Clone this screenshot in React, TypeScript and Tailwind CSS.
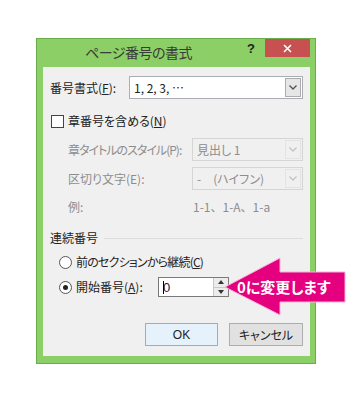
import React from "react";

const Chevron = ({ color }: { color: string }) => (
  <svg width="8" height="5" viewBox="0 0 8 5">
    <path d="M0.5 0.5 L4 4 L7.5 0.5" fill="none" stroke={color} strokeWidth="1.4" />
  </svg>
);

const Select = ({ value, disabled, className }: { value: string; disabled?: boolean; className: string }) => (
  <div
    className={`flex h-[23px] items-stretch border ${disabled ? "border-[#d5d5d5] bg-[#f0f0f0]" : "border-[#abadb3] bg-white"} ${className}`}
  >
    <div className={`flex flex-1 items-center whitespace-nowrap pl-[4px] ${disabled ? "text-[#8d8d8d]" : "text-[#222]"}`}>{value}</div>
    <div
      className={`m-[1px] flex w-[16px] items-center justify-center border ${disabled ? "border-[#e3e3e3] bg-[#f0f0f0]" : "border-[#acacac] bg-[#e6e6e6]"}`}
    >
      <Chevron color={disabled ? "#c4c4c4" : "#555"} />
    </div>
  </div>
);

export default function App() {
  return (
    <div className="relative h-[400px] w-[355px] overflow-hidden whitespace-nowrap bg-white font-['Noto_Sans_CJK_JP','Noto_Sans',sans-serif] text-[12px] leading-none text-[#222] [font-feature-settings:'palt']">
      <div className="ml-[36px] mt-[38px] flex h-[326px] w-[280px] flex-col border border-[#69ad4c] bg-[#8bcf66]">
        {/* title bar */}
        <div className="flex h-[28px] items-start">
          <div className="ml-[48px] mt-[6px] w-[110px] text-[14px] tracking-[-0.5px] text-[#3a3a3a]">ページ番号の書式</div>
          <div className="ml-[52px] mt-[3px] font-['Liberation_Sans',sans-serif] text-[13px] font-bold text-[#222]">?</div>
          <div className="ml-[10px] flex h-[18px] w-[45px] items-center justify-center bg-[#c75050]">
            <svg width="9" height="9" viewBox="0 0 9 9">
              <path d="M1 1 L8 8 M8 1 L1 8" stroke="white" strokeWidth="1.6" />
            </svg>
          </div>
        </div>
        {/* client area */}
        <div className="ml-[6px] flex h-[289px] w-[267px] flex-col bg-[#f0f0f0]">
          {/* row 1 */}
          <div className="mt-[9px] flex items-center">
            <div className="ml-[7px] w-[79px] shrink-0">
              番号書式(<span className="underline">F</span>):
            </div>
            <Select value="1, 2, 3, …" className="w-[174px]" />
          </div>
          {/* checkbox */}
          <div className="mt-[14px] flex h-[16px] items-center">
            <div className="ml-[8px] h-[13px] w-[13px] border border-[#444] bg-white" />
            <div className="ml-[4px]">
              章番号を含める(<span className="underline">N</span>)
            </div>
          </div>
          {/* disabled rows */}
          <div className="mt-[9px] flex items-center text-[#8d8d8d]">
            <div className="ml-[25px] w-[124px] shrink-0 tracking-[-1px]">章タイトルのスタイル(P):</div>
            <Select value="見出し 1" disabled className="w-[111px]" />
          </div>
          <div className="mt-[6px] flex items-center text-[#8d8d8d]">
            <div className="ml-[25px] w-[124px] shrink-0">区切り文字(E):</div>
            <Select value="-　(ハイフン)" disabled className="w-[111px]" />
          </div>
          <div className="mt-[9px] flex h-[16px] items-center text-[#8d8d8d]">
            <div className="ml-[25px] w-[124px] shrink-0">例:</div>
            <div className="pl-[1px] [font-feature-settings:normal]">1-1、1-A、1-a</div>
          </div>
          {/* group */}
          <div className="mt-[15px] flex h-[16px] items-center pr-[7px]">
            <div className="ml-[7px]">連続番号</div>
            <div className="ml-[6px] h-px flex-1 bg-[#dcdcdc]" />
          </div>
          <div className="mt-[8px] flex h-[16px] items-center">
            <div className="ml-[16px] h-[13px] w-[13px] rounded-full border border-[#555] bg-white" />
            <div className="ml-[4px] tracking-[-0.8px]">
              前のセクションから継続(<span className="underline">C</span>)
            </div>
          </div>
          <div className="mt-[7px] flex h-[20px] items-center">
            <div className="ml-[16px] flex h-[13px] w-[13px] items-center justify-center rounded-full border border-[#555] bg-white">
              <div className="h-[5px] w-[5px] rounded-full bg-[#222]" />
            </div>
            <div className="ml-[4px] w-[82px] shrink-0">
              開始番号(<span className="underline">A</span>):
            </div>
            <div className="flex h-[20px] w-[71px] items-stretch border border-[#7a7a7a] bg-white">
              <div className="relative flex flex-1 items-center pl-[4px]">
                <span className="font-['Liberation_Sans',sans-serif] text-[13px]">0</span>
                <div className="absolute left-[4px] top-[3px] h-[13px] w-px bg-black" />
              </div>
              <div className="flex w-[15px] flex-col border-l border-[#c8c8c8] bg-[#ececec]">
                <div className="flex flex-1 items-center justify-center border-b border-[#c8c8c8]">
                  <svg width="6" height="4" viewBox="0 0 6 4"><path d="M0 4 L3 0 L6 4Z" fill="#333" /></svg>
                </div>
                <div className="flex flex-1 items-center justify-center">
                  <svg width="6" height="4" viewBox="0 0 6 4"><path d="M0 0 L3 4 L6 0Z" fill="#333" /></svg>
                </div>
              </div>
            </div>
          </div>
          {/* buttons */}
          <div className="mt-[26px] flex justify-end gap-[11px] pr-[7px]">
            <div className="flex h-[23px] w-[73px] items-center justify-center border border-[#7eb4ea] bg-[#e5f1fb] font-['Liberation_Sans',sans-serif] text-[12px]">
              OK
            </div>
            <div className="flex h-[23px] w-[74px] items-center justify-center border border-[#adadad] bg-[#e1e1e1]">
              キャンセル
            </div>
          </div>
        </div>
      </div>
      {/* callout overlay */}
      <svg className="absolute left-0 top-0" width="355" height="400" viewBox="0 0 355 400">
        <polygon
          points="225,287 280,258 280,272 345,272 345,302 280,302 280,315"
          fill="#e4007f"
          stroke="#f6b3d7"
          strokeWidth="1"
        />
      </svg>
      <div className="absolute left-[237px] top-[278px] text-[15px] font-bold leading-[18px] text-white">0に変更します</div>
    </div>
  );
}
